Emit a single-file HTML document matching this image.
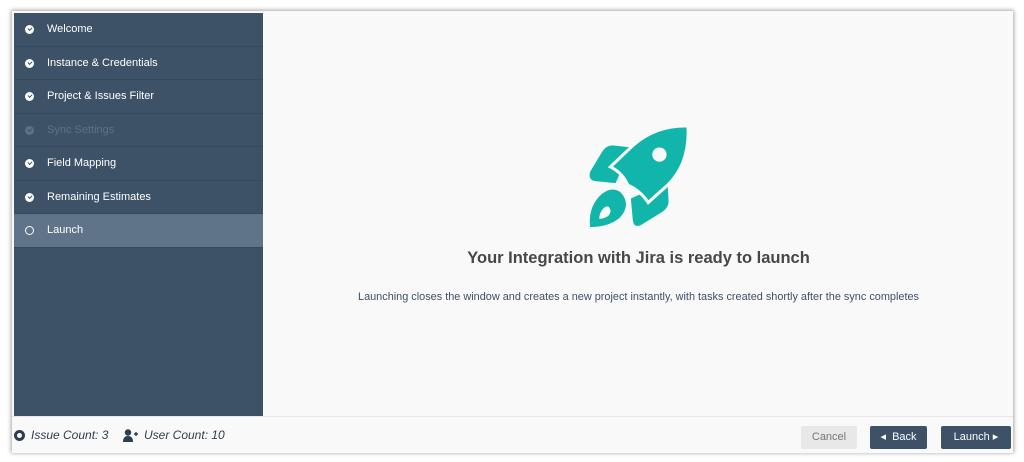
<!DOCTYPE html>
<html><head><style>
body{margin:0;width:1024px;height:462px;background:#fff;font-family:"Liberation Sans",sans-serif;overflow:hidden;position:relative}
.win{position:absolute;left:12px;top:11px;width:1001px;height:441px;background:#f9f9f9;box-shadow:0 0 4px 1px rgba(0,0,0,.35)}
.side{position:absolute;left:2px;top:2px;width:249px;height:403px;background:#3d5167}
.row{height:32.5px;border-bottom:1px solid #364a5f;color:#fff;font-size:11px;line-height:33px;padding-left:33px;position:relative}
.row .ic{position:absolute;left:11px;top:12px;width:9px;height:9px;border-radius:50%;background:#fff}
.row .ic:after{content:"";position:absolute;left:2.5px;top:2px;width:3px;height:2px;border-left:1.3px solid #3d5167;border-bottom:1.3px solid #3d5167;transform:rotate(-45deg)}
.dim{color:#5f7185}.dim .ic{background:#5f7185}
.act{background:#5f7389}.act .ic{background:none;border:1px solid #fff;width:7px;height:7px}.act .ic:after{display:none}
.foot{position:absolute;left:0;top:405px;width:1001px;height:36px;border-top:1px solid #e6e6e6;background:#f9f9f9}
.btn{position:absolute;top:9px;height:23px;line-height:23px;font-size:11px;text-align:center;border-radius:2px}
h1{position:absolute;left:252px;width:749px;top:238px;margin:0;text-align:center;font-size:16.5px;font-weight:bold;color:#474747}
p{position:absolute;left:252px;width:749px;top:280px;margin:0;text-align:center;font-size:10.9px;color:#3d5167}
</style></head><body>
<div class="win">
<div class="side">
<div class="row"><span class="ic"></span>Welcome</div>
<div class="row"><span class="ic"></span>Instance &amp; Credentials</div>
<div class="row"><span class="ic"></span>Project &amp; Issues Filter</div>
<div class="row dim"><span class="ic"></span>Sync Settings</div>
<div class="row"><span class="ic"></span>Field Mapping</div>
<div class="row"><span class="ic"></span>Remaining Estimates</div>
<div class="row act"><span class="ic"></span>Launch</div>
</div>
<svg style="position:absolute;left:575px;top:114px" width="102" height="102" viewBox="0 0 100 100">
<g fill="#12b5aa">
<path d="M44,22 L25,20 Q19,20 15,26 L3,46 Q1,54 8,55 L28,57 Z"/>
<path d="M79,56 L80,75 Q80,81 74,85 L53,98 Q46,101 45,94 L43,72 Z"/>
<path d="M99,1 Q101,38 79,59 L60,76 Q52,64 40,59 Q35,47 23,41 L43,22 Q66,0 99,1 Z" stroke="#f9f9f9" stroke-width="3"/>
<path d="M33,66 Q44,78 32,91 Q21,100 3,100 Q1,82 12,70 Q23,59 33,66 Z"/>
</g>
<circle cx="71" cy="29" r="7" fill="#f9f9f9"/>
<path d="M21,80 Q25,84 21,89 Q17,92 12,92 Q12,87 15,83 Q18,79 21,80Z" fill="#f9f9f9"/>
</svg>
<h1>Your Integration with Jira is ready to launch</h1>
<p>Launching closes the window and creates a new project instantly, with tasks created shortly after the sync completes</p>
<div class="foot">
<div style="position:absolute;left:2px;top:13px;width:5px;height:5px;border:3px solid #2c3e50;border-radius:50%;background:#fff"></div>
<div style="position:absolute;left:19px;top:11px;font-size:12px;font-style:italic;color:#2c3e50">Issue Count: 3</div>
<svg style="position:absolute;left:111px;top:12px" width="16" height="13" viewBox="0 0 16 13"><circle cx="5" cy="3.5" r="3.2" fill="#2c3e50"/><path d="M0,13 Q0,7 5,7 Q10,7 10,13Z" fill="#2c3e50"/><path d="M11,5h4M13,3v4" stroke="#2c3e50" stroke-width="1.4"/></svg>
<div style="position:absolute;left:132px;top:11px;font-size:12px;font-style:italic;color:#2c3e50">User Count: 10</div>
<div class="btn" style="left:789px;width:56px;background:#e8e8e8;color:#777">Cancel</div>
<div class="btn" style="left:858px;width:57px;background:#3d5167;color:#fff">&#9666;&nbsp; Back</div>
<div class="btn" style="left:929px;width:70px;background:#3d5167;color:#fff">Launch &#9656;</div>
</div>
</div>
</body></html>
